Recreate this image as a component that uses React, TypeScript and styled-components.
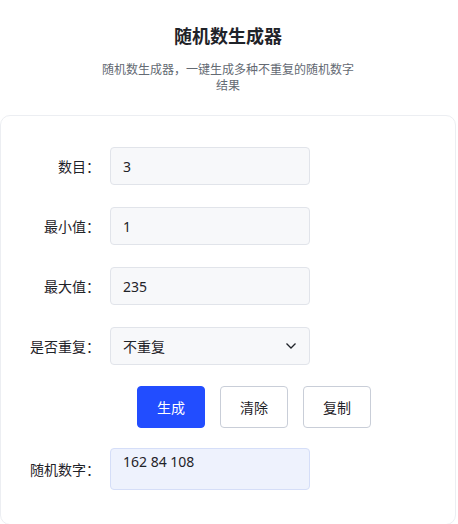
import { useState } from 'react';
import styled, { createGlobalStyle } from 'styled-components';

const GlobalStyle = createGlobalStyle`
  body {
    margin: 0;
    background: #ffffff;
    font-family: "Noto Sans", "Noto Sans CJK SC", sans-serif;
    color: #1f2329;
  }
`;

const Page = styled.div`
  width: 456px;
`;

const Header = styled.header`
  display: flex;
  flex-direction: column;
  align-items: center;
  padding-top: 24px;
`;

const Title = styled.h1`
  margin: 0;
  font-size: 18px;
  line-height: 24px;
  font-weight: 700;
  color: #1f2329;
`;

const Subtitle = styled.p`
  margin: 14px 0 0;
  max-width: 256px;
  text-align: center;
  font-size: 12px;
  line-height: 16px;
  color: #646a73;
`;

const Card = styled.section`
  margin-top: 21px;
  border: 1px solid #eceef2;
  border-radius: 10px;
  padding: 31px 19px 34px;
  display: flex;
  flex-direction: column;
  gap: 22px;
`;

const Row = styled.div`
  display: flex;
  align-items: center;
  gap: 10px;
`;

const Label = styled.label`
  width: 80px;
  text-align: right;
  font-size: 14px;
  color: #1f2329;
  white-space: nowrap;
`;

const Field = styled.div<{ $result?: boolean }>`
  position: relative;
  box-sizing: border-box;
  width: 200px;
  height: ${(p) => (p.$result ? '42px' : '38px')};
  border: 1px solid ${(p) => (p.$result ? '#d5def8' : '#e1e4ea')};
  background: ${(p) => (p.$result ? '#eef2fd' : '#f7f8fa')};
  border-radius: 4px;
  padding: ${(p) => (p.$result ? '3px 12px' : '0 12px')};
  display: flex;
  align-items: ${(p) => (p.$result ? 'flex-start' : 'center')};
  font-size: 14px;
  color: #1f2329;
`;

const Input = styled.input`
  border: none;
  outline: none;
  background: transparent;
  width: 100%;
  padding: 0;
  font: inherit;
  color: inherit;
`;

const Chevron = styled.svg`
  position: absolute;
  right: 12px;
  top: 50%;
  margin-top: -4px;
`;

const ButtonRow = styled.div`
  display: flex;
  gap: 15px;
  padding-left: 117px;
  margin: -1px 0 -2px;
`;

const Button = styled.button<{ $primary?: boolean }>`
  width: 68px;
  height: 42px;
  border-radius: 4px;
  font-family: inherit;
  font-size: 14px;
  cursor: pointer;
  border: 1px solid ${(p) => (p.$primary ? '#224dff' : '#c9ced8')};
  background: ${(p) => (p.$primary ? '#224dff' : '#ffffff')};
  color: ${(p) => (p.$primary ? '#ffffff' : '#1f2329')};
`;

export default function App() {
  const [count, setCount] = useState('3');
  const [min, setMin] = useState('1');
  const [max, setMax] = useState('235');
  const [result, setResult] = useState('162 84 108');

  const generate = () => {
    const n = parseInt(count, 10) || 0;
    const lo = parseInt(min, 10) || 0;
    const hi = parseInt(max, 10) || 0;
    const picked = new Set<number>();
    while (picked.size < n && picked.size <= hi - lo) {
      picked.add(lo + Math.floor(Math.random() * (hi - lo + 1)));
    }
    setResult(Array.from(picked).join(' '));
  };

  return (
    <Page>
      <GlobalStyle />
      <Header>
        <Title>随机数生成器</Title>
        <Subtitle>随机数生成器，一键生成多种不重复的随机数字结果</Subtitle>
      </Header>
      <Card>
        <Row>
          <Label>数目：</Label>
          <Field>
            <Input value={count} onChange={(e) => setCount(e.target.value)} />
          </Field>
        </Row>
        <Row>
          <Label>最小值：</Label>
          <Field>
            <Input value={min} onChange={(e) => setMin(e.target.value)} />
          </Field>
        </Row>
        <Row>
          <Label>最大值：</Label>
          <Field>
            <Input value={max} onChange={(e) => setMax(e.target.value)} />
          </Field>
        </Row>
        <Row>
          <Label>是否重复：</Label>
          <Field>
            不重复
            <Chevron width="12" height="8" viewBox="0 0 12 8">
              <path d="M1.5 1.5 L6 6 L10.5 1.5" fill="none" stroke="#1f2329" strokeWidth="1.3" />
            </Chevron>
          </Field>
        </Row>
        <ButtonRow>
          <Button $primary onClick={generate}>生成</Button>
          <Button onClick={() => setResult('')}>清除</Button>
          <Button>复制</Button>
        </ButtonRow>
        <Row>
          <Label>随机数字：</Label>
          <Field $result>{result}</Field>
        </Row>
      </Card>
    </Page>
  );
}
